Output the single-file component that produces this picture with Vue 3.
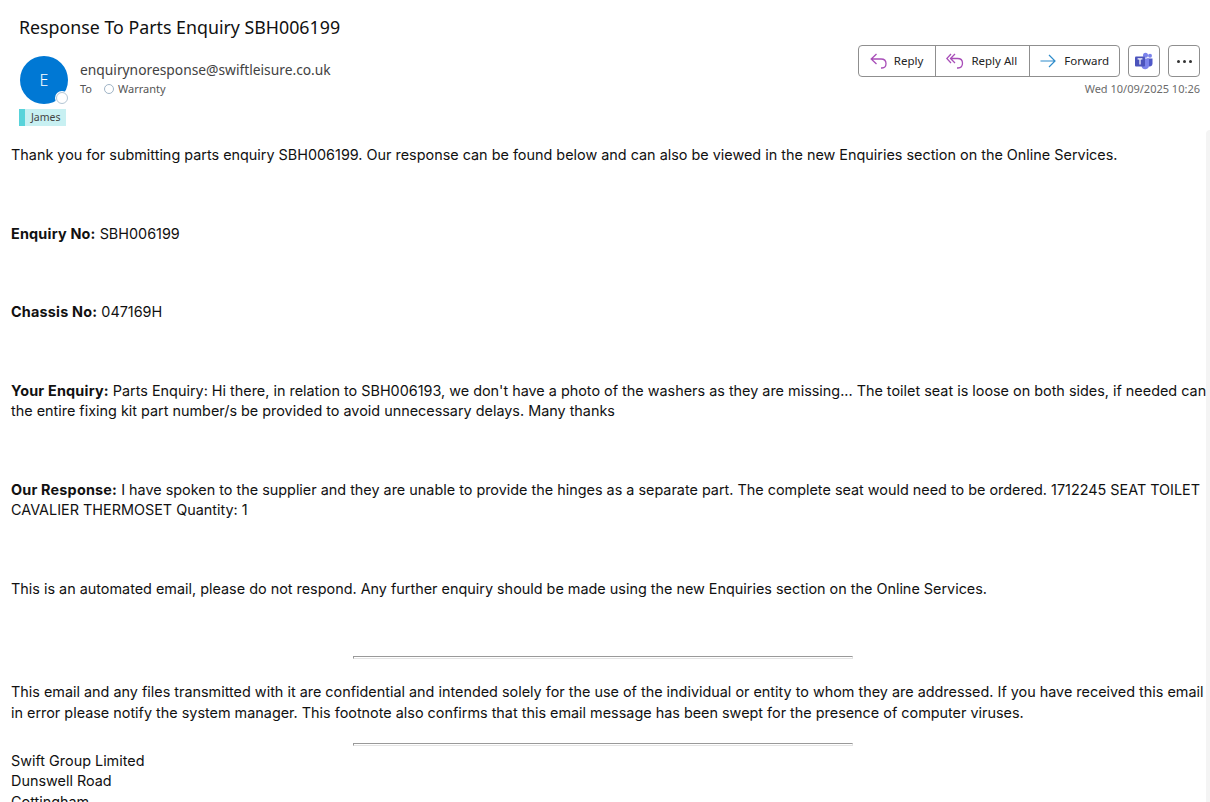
<script setup>
const actions = [
  { label: 'Reply', kind: 'reply' },
  { label: 'Reply All', kind: 'all' },
  { label: 'Forward', kind: 'fwd' }
]
</script>

<template>
  <div class="mail">
    <div class="scrolltrack"></div>
    <header class="head">
      <h1 class="subject">Response To Parts Enquiry SBH006199</h1>
      <div class="meta">
        <div class="sender">
          <div class="avatar">E<span class="presence"></span></div>
          <div class="who">
            <div class="from">enquirynoresponse@swiftleisure.co.uk</div>
            <div class="to"><span>To</span><i class="ring"></i><span>Warranty</span></div>
          </div>
        </div>
        <div class="tools">
          <div class="toolrow">
            <div class="group">
              <button v-for="a in actions" :key="a.label" class="act" :class="a.kind">
                <svg v-if="a.kind === 'reply'" width="18" height="16" viewBox="0 0 18 16" fill="none" stroke="#a84eb8" stroke-width="1.3"><path d="M6.500 1 1.200 6l5.300 5M1.200 6H11c3.200 0 5 1.800 5 4.500S14.700 15 12 15h-1"/></svg>
                <svg v-else-if="a.kind === 'all'" width="18" height="16" viewBox="0 0 18 16" fill="none" stroke="#a84eb8" stroke-width="1.3"><path d="M5 1 .8 5.500 5 10M9 1 4.500 5.500 9 10M4.500 5.500H11.500c3.200 0 5 1.800 5 4.500s-1.500 5-4.500 5h-1"/></svg>
                <svg v-else width="16" height="14" viewBox="0 0 16 14" fill="none" stroke="#2e8ccb" stroke-width="1.2"><path d="M.5 7h14.500M9 1l6 6-6 6"/></svg>
                <span>{{ a.label }}</span>
              </button>
            </div>
            <button class="square" aria-label="Teams">
              <svg width="18" height="18" viewBox="0 0 18 18">
                <circle cx="15" cy="3.800" r="2" fill="#7b83eb"/>
                <circle cx="10.500" cy="3.200" r="2.500" fill="#7b83eb"/>
                <path d="M12 6.500h5.500v5.200a2.800 2.800 0 0 1-5 1.700z" fill="#5059c9"/>
                <path d="M6.500 6.500H14v7a3.800 3.800 0 0 1-7.500.800z" fill="#7b83eb"/>
                <rect x="0" y="4.500" width="10" height="10" rx="1" fill="#4b53bc"/>
                <path d="M2.600 6.800h4.800M5 6.800v5.600" stroke="#fff" stroke-width="1.200" fill="none"/>
              </svg>
            </button>
            <button class="square dots" aria-label="More"><b></b><b></b><b></b></button>
          </div>
          <div class="date">Wed 10/09/2025 10:26</div>
        </div>
      </div>
      <div class="tag"><span>James</span></div>
    </header>

    <main class="body">
      <p>Thank you for submitting parts enquiry SBH006199. Our response can be found below and can also be viewed in the new Enquiries section on the Online Services.</p>
      <p><b>Enquiry No:</b> SBH006199</p>
      <p><b>Chassis No:</b> 047169H</p>
      <p><b>Your Enquiry:</b> Parts Enquiry: Hi there, in relation to SBH006193, we don't have a photo of the washers as they are missing... The toilet seat is loose on both sides, if needed can the entire fixing kit part number/s be provided to avoid unnecessary delays. Many thanks</p>
      <p><b>Our Response:</b> I have spoken to the supplier and they are unable to provide the hinges as a separate part. The complete seat would need to be ordered. 1712245 SEAT TOILET CAVALIER THERMOSET Quantity: 1</p>
      <p class="last">This is an automated email, please do not respond. Any further enquiry should be made using the new Enquiries section on the Online Services.</p>
      <hr class="rule first" />
      <p class="foot">This email and any files transmitted with it are confidential and intended solely for the use of the individual or entity to whom they are addressed. If you have received this email in error please notify the system manager. This footnote also confirms that this email message has been swept for the presence of computer viruses.</p>
      <hr class="rule second" />
      <div class="addr">
        <div>Swift Group Limited</div>
        <div>Dunswell Road</div>
        <div>Cottingham</div>
      </div>
    </main>
  </div>
</template>

<style scoped>
.mail { position: relative; width: 1210px; height: 802px; overflow: hidden; background: #fff; color: #1a1a1a; font-family: "Noto Sans", sans-serif; }
.scrolltrack { position: absolute; right: 0; top: 130px; bottom: 0; width: 4px; background: #f4f4f4; border-radius: 4px 0 0 0; }
.head { padding: 0 10px 0 19px; }
.subject { margin: 0; padding-top: 14px; height: 41px; box-sizing: border-box; font-weight: 400; font-size: 17.800px; line-height: 26px; color: #111; }
.meta { display: flex; justify-content: space-between; height: 68px; }
.sender { display: flex; padding-top: 15px; padding-left: 1px; }
.avatar { position: relative; width: 48px; height: 48px; border-radius: 50%; background: #0078d4; color: #fff; font-size: 16px; font-weight: 300; display: flex; align-items: center; justify-content: center; }
.presence { position: absolute; right: 0; bottom: 0; width: 10px; height: 10px; border-radius: 50%; background: #fff; border: 1.500px solid #b4c6d4; box-shadow: 0 0 0 1px #fff; }
.who { padding-left: 12px; padding-top: 4px; }
.from { font-size: 13.800px; line-height: 20px; color: #424242; }
.to { display: flex; align-items: center; font-size: 11px; line-height: 17px; color: #555; }
.ring { width: 8px; height: 8px; border: 1px solid #9fb4c6; border-radius: 50%; margin: 0 4px 0 12px; }
.tools { display: flex; flex-direction: column; align-items: flex-end; padding-top: 4px; }
.toolrow { display: flex; gap: 8px; }
.group { display: flex; border: 1px solid #8f8f8f; border-radius: 4px; height: 32px; box-sizing: border-box; }
.act { display: flex; align-items: center; height: 30px; padding: 0 11px; gap: 7px; border: 0; border-right: 1px solid #8f8f8f; border-radius: 4px 0 0 4px; background: transparent; font: 11.500px "Noto Sans", sans-serif; color: #242424; box-sizing: content-box; }
.act span { position: relative; top: -1px; }
.act:last-child { border-right: 0; }
.act.reply { gap: 6px; padding-right: 12px; }
.act.all { padding: 0 12px 0 10px; border-radius: 0; }
.act.fwd { gap: 8px; padding: 0 10px; border-radius: 0 4px 4px 0; }
.square { width: 32px; height: 32px; border: 1px solid #8f8f8f; border-radius: 4px; background: #fff; padding: 0; display: flex; align-items: center; justify-content: center; }
.dots { gap: 3px; }
.dots b { width: 3px; height: 3px; border-radius: 50%; background: #333; }
.date { font-size: 11px; line-height: 16px; color: #6b6b6b; margin-top: 4px; }
.tag { width: 47px; height: 17px; background: #c8f0f2; border-left: 6px solid #58d3da; box-sizing: border-box; font: 10.500px/17px "Noto Sans", sans-serif; color: #444; padding-left: 6px; }
.body { padding: 0 0 0 11px; margin-top: 19px; font-size: 14.400px; line-height: 20.500px; color: #111; font-family: Inter, sans-serif; }
.body b { letter-spacing: 0.2px; }
.body p { margin: 0 0 58px; }
.body p.last { margin-bottom: 57px; }
.rule { width: 500px; height: 3px; margin: 0 0 0 342px; border: 1px solid; border-color: #999 #e4e4e4 #e4e4e4 #999; box-sizing: border-box; }
.rule.first { margin-bottom: 23px; }
.body p.foot { margin-bottom: 20px; }
.rule.second { margin-bottom: 5px; }
.addr div { line-height: 20.300px; }
</style>
